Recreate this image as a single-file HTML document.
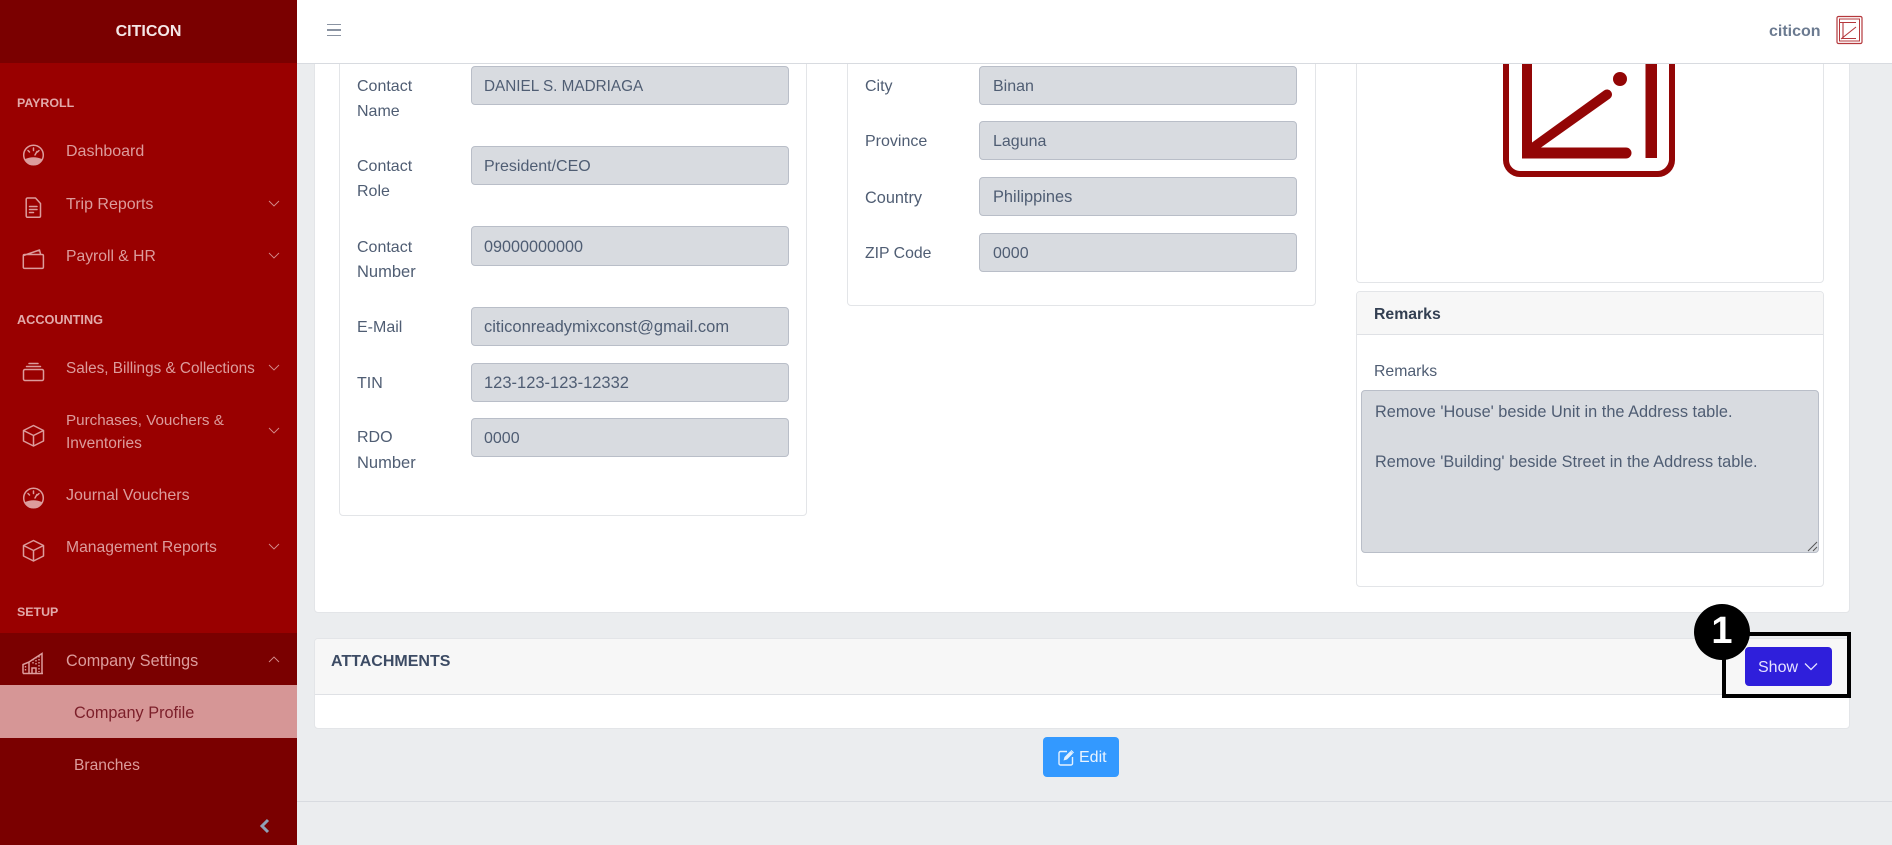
<!DOCTYPE html>
<html lang="en">
<head>
<meta charset="utf-8">
<title>Company Profile</title>
<style>
html,body{margin:0;padding:0;width:1892px;height:845px;overflow:hidden;background:#ebedef;font-family:"Liberation Sans",sans-serif;font-size:16px;color:#4f5d73}
*{box-sizing:border-box}
.a{position:absolute}
.t{position:absolute;height:24px;line-height:24px;white-space:nowrap;margin-top:1px}
.side{color:#dc9c9c}
.lab{font-weight:bold;font-size:12.400px;color:#e2aaaa}
.card{position:absolute;background:#fff;border:1px solid #e3e5e8;border-radius:4px}
.inp{position:absolute;background:#d8dbe0;border:1px solid #b9bec8;border-radius:4px;height:39px;line-height:39px;padding-left:12px;color:#4f5d73;white-space:nowrap}
svg{position:absolute;overflow:visible}
.ic{fill:none;stroke:#dc9c9c;stroke-width:1.5;stroke-linejoin:round;stroke-linecap:round}
.ch{fill:none;stroke:#d48c8c;stroke-width:.9}
</style>
</head>
<body>
<!-- main content -->
<div class="card" style="left:314px;top:40px;width:1536px;height:573px"></div>

<div class="card" style="left:339px;top:30px;width:468px;height:486px"></div>
<div class="card" style="left:847px;top:30px;width:469px;height:276px"></div>
<div class="card" style="left:1356px;top:30px;width:468px;height:253px"></div>

<svg style="left:0;top:0" width="1892" height="200">
  <g fill="#930606">
    <path d="M1503 20h6v140a11 11 0 0 0 11 11h137a12 12 0 0 0 12-11V20h6v140a17 17 0 0 1-17 17H1520a17 17 0 0 1-17-17z"/>
    <path d="M1522 40h10v102.500l72-52a5 5 0 0 1 6 8l-69 49h85a5.500 5.500 0 0 1 0 11h-104z"/>
    <rect x="1645.500" y="40" width="11.500" height="118"/>
    <circle cx="1620" cy="79" r="7"/>
  </g>
</svg>

<!-- left labels -->
<div class="t" style="left:357px;top:74px">Contact</div>
<div class="t" style="left:357px;top:99px">Name</div>
<div class="t" style="left:357px;top:154px">Contact</div>
<div class="t" style="left:357px;top:179px">Role</div>
<div class="t" style="left:357px;top:235px">Contact</div>
<div class="t" style="left:357px;top:259px;font-size:16.500px">Number</div>
<div class="t" style="left:357px;top:315px">E-Mail</div>
<div class="t" style="left:357px;top:371px">TIN</div>
<div class="t" style="left:357px;top:425px">RDO</div>
<div class="t" style="left:357px;top:450px;font-size:16.500px">Number</div>

<div class="inp" style="left:471px;top:66px;width:318px;font-size:15.300px">DANIEL S. MADRIAGA</div>
<div class="inp" style="left:471px;top:146px;width:318px">President/CEO</div>
<div class="inp" style="left:471px;top:226px;width:318px;height:40px;line-height:40px;font-size:16.200px">09000000000</div>
<div class="inp" style="left:471px;top:307px;width:318px;font-size:16.500px">citiconreadymixconst@gmail.com</div>
<div class="inp" style="left:471px;top:363px;width:318px;font-size:16.500px">123-123-123-12332</div>
<div class="inp" style="left:471px;top:418px;width:318px">0000</div>

<!-- middle -->
<div class="t" style="left:865px;top:74px">City</div>
<div class="t" style="left:865px;top:129px">Province</div>
<div class="t" style="left:865px;top:185px;font-size:16.300px">Country</div>
<div class="t" style="left:865px;top:241px;font-size:15.800px">ZIP Code</div>
<div class="inp" style="left:979px;top:66px;width:318px;padding-left:13px">Binan</div>
<div class="inp" style="left:979px;top:121px;width:318px;padding-left:13px">Laguna</div>
<div class="inp" style="left:979px;top:177px;width:318px;padding-left:13px;font-size:16.400px">Philippines</div>
<div class="inp" style="left:979px;top:233px;width:318px;padding-left:13px">0000</div>

<!-- remarks -->
<div class="card" style="left:1356px;top:291px;width:468px;height:296px"></div>
<div class="a" style="left:1357px;top:292px;width:466px;height:43px;background:#f7f7f7;border-bottom:1px solid #dfe1e5;border-radius:3px 3px 0 0"></div>
<div class="t" style="left:1374px;top:302px;font-weight:bold;color:#333f52;font-size:15.800px">Remarks</div>
<div class="t" style="left:1374px;top:359px;font-size:15.800px">Remarks</div>
<div class="a" style="left:1361px;top:390px;width:458px;height:163px;background:#d8dbe0;border:1px solid #b9bec8;border-radius:4px"></div>
<div class="t" style="left:1375px;top:399px;font-size:16.330px">Remove 'House' beside Unit in the Address table.</div>
<div class="t" style="left:1375px;top:449px;font-size:16.320px">Remove 'Building' beside Street in the Address table.</div>
<svg style="left:1805px;top:540px" width="14" height="12"><path d="M3 11L12 2M8 11l4-4" stroke="#555" stroke-width="1" fill="none"/></svg>

<!-- attachments -->
<div class="card" style="left:314px;top:638px;width:1536px;height:91px"></div>
<div class="a" style="left:315px;top:639px;width:1534px;height:56px;background:#f7f7f7;border-bottom:1px solid #dfe1e5;border-radius:3px 3px 0 0"></div>
<div class="t" style="left:331px;top:649px;font-weight:bold;font-size:16px;color:#3c4b64">ATTACHMENTS</div>

<div class="a" style="left:1745px;top:647px;width:87px;height:39px;background:#2f1fdb;border-radius:4px"></div>
<div class="t" style="left:1758px;top:655px;color:#e6e3ff">Show</div>
<svg style="left:1804px;top:662px" width="14" height="9"><path d="M1 1.500l6 6 6-6" fill="none" stroke="#e6e3ff" stroke-width="1.300"/></svg>

<div class="a" style="left:1722px;top:632px;width:129px;height:66px;border:4px solid #000"></div>
<div class="a" style="left:1694px;top:604px;width:56px;height:56px;background:#000;border-radius:50%"></div>
<div class="t" style="left:1694px;top:615px;width:56px;height:30px;line-height:30px;text-align:center;font-weight:bold;font-size:38px;color:#fff">1</div>

<!-- edit -->
<div class="a" style="left:1043px;top:737px;width:76px;height:40px;background:#3399ff;border-radius:4px"></div>
<svg style="left:1058px;top:749px" width="17" height="17" fill="none" stroke="#e4f1ff" stroke-width="1.400">
  <path d="M9 2.500H2.500a1.500 1.500 0 0 0-1.500 1.500v10.500a1.500 1.500 0 0 0 1.500 1.500h10.500a1.500 1.500 0 0 0 1.500-1.500V8"/>
  <path d="M5.500 11.500l1-3.500 6-6 2.500 2.500-6 6z" fill="#e4f1ff" stroke="none"/>
  <path d="M13.500 1l2.500 2.500-.8.800-2.500-2.500z" fill="#e4f1ff" stroke="none"/>
</svg>
<div class="t" style="left:1079px;top:745px;color:#eaf4ff">Edit</div>

<!-- footer line -->
<div class="a" style="left:297px;top:801px;width:1595px;height:1px;background:#d8dbe0"></div>

<!-- top bar -->
<div class="a" style="left:297px;top:0;width:1595px;height:64px;background:#fff;border-bottom:1px solid #d8dbe0"></div>
<div class="a" style="left:327px;top:23.500px;width:14px;height:1.500px;background:#8a93a2"></div>
<div class="a" style="left:327px;top:29px;width:14px;height:1.500px;background:#8a93a2"></div>
<div class="a" style="left:327px;top:34.500px;width:14px;height:1.500px;background:#8a93a2"></div>
<div class="t" style="left:1769px;top:19px;font-weight:bold;color:#6b7a90">citicon</div>
<svg style="left:1836px;top:16px" width="27" height="28" fill="none" stroke="#b5383c">
  <rect x="1" y=".500" width="25" height="27" rx="1.500" stroke-width="1.200"/>
  <rect x="3.500" y="3" width="20" height="22" stroke-width="1"/>
  <path d="M4 6.500h16M7 7v16M5 23l15-12M6 22.500h14" stroke-width="1.100"/>
</svg>

<!-- sidebar -->
<div class="a" style="left:0;top:0;width:297px;height:845px;background:#990000"></div>
<div class="a" style="left:0;top:0;width:297px;height:63px;background:#7a0000"></div>
<div class="t" style="left:0;top:19px;width:297px;text-align:center;font-weight:bold;color:#f4e6e6">CITICON</div>

<div class="t lab" style="left:17px;top:90px">PAYROLL</div>
<div class="t side" style="left:66px;top:139px">Dashboard</div>
<div class="t side" style="left:66px;top:192px">Trip Reports</div>
<div class="t side" style="left:66px;top:244px;font-size:15.700px">Payroll &amp; HR</div>
<div class="t lab" style="left:17px;top:307px;font-size:12.700px">ACCOUNTING</div>
<div class="t side" style="left:66px;top:356px;font-size:15.300px">Sales, Billings &amp; Collections</div>
<div class="t side" style="left:66px;top:408px;font-size:15.200px">Purchases, Vouchers &amp;</div>
<div class="t side" style="left:66px;top:431px;font-size:15.500px">Inventories</div>
<div class="t side" style="left:66px;top:483px">Journal Vouchers</div>
<div class="t side" style="left:66px;top:535px;font-size:15.700px">Management Reports</div>
<div class="t lab" style="left:17px;top:599px">SETUP</div>

<div class="a" style="left:0;top:633px;width:297px;height:212px;background:#7a0000"></div>
<div class="a" style="left:0;top:685px;width:297px;height:53px;background:#d69696"></div>
<div class="t side" style="left:66px;top:648px;font-size:16.200px">Company Settings</div>
<div class="t" style="left:74px;top:700px;color:#7c1f2a;font-size:16.300px">Company Profile</div>
<div class="t side" style="left:74px;top:753px;font-size:15.600px">Branches</div>

<!-- chevrons -->
<svg style="left:0;top:0" width="296" height="845">
  <path class="ch" d="M269 201l5 5 5-5M269 253l5 5 5-5M269 365l5 5 5-5M269 428l5 5 5-5M269 544l5 5 5-5M269 662l5-5 5 5"/>
  <path d="M268 820l-6 6 6 6" fill="none" stroke="#8fa0b5" stroke-width="3"/>

  <!-- speedometer -->
  <g>
    <circle class="ic" cx="33.500" cy="155" r="9.800"/>
    <path d="M24.700 159.300q8.800-4 17.600 0A9.800 9.800 0 0 1 24.700 159.300z" fill="#dc9c9c"/>
    <path class="ic" d="M33.500 148v2.500M28 150.500l1.500 1.500M39 150.500l-1.500 1.500M35 155l2-3.500" stroke-width="1.200"/>
  </g>
  <g transform="translate(0 343)">
    <circle class="ic" cx="33.500" cy="155" r="9.800"/>
    <path d="M24.700 159.300q8.800-4 17.600 0A9.800 9.800 0 0 1 24.700 159.300z" fill="#dc9c9c"/>
    <path class="ic" d="M33.500 148v2.500M28 150.500l1.500 1.500M39 150.500l-1.500 1.500M35 155l2-3.500" stroke-width="1.200"/>
  </g>
  <!-- document -->
  <path class="ic" d="M27.500 198h8l5 5.500v12.500a1.300 1.300 0 0 1-1.300 1.300H27.500a1.300 1.300 0 0 1-1.300-1.300V199.300a1.300 1.300 0 0 1 1.300-1.300z"/>
  <path class="ic" d="M29.500 206.500h7.500M29.500 209.500h7.500M29.500 212.500h4"/>
  <!-- wallet -->
  <path class="ic" d="M23.500 255.500l16-5.500 1 4M24.500 254.500h17.700a1.200 1.200 0 0 1 1.200 1.200v11.500a1.200 1.200 0 0 1-1.200 1.200H24.500a1.200 1.200 0 0 1-1.200-1.200v-11.500a1.200 1.200 0 0 1 1.200-1.200z"/>
  <!-- stack -->
  <path class="ic" d="M29 363.500h9M26.500 366.500h14M25 369.500h17a1.500 1.500 0 0 1 1.500 1.500v8a1.500 1.500 0 0 1-1.500 1.500H25a1.500 1.500 0 0 1-1.500-1.500v-8a1.500 1.500 0 0 1 1.500-1.500z"/>
  <!-- boxes -->
  <path class="ic" d="M33.500 425.500l10 5v10.500l-10 5-10-5v-10.500zM23.500 430.500l10 5 10-5M33.500 435.500v10.500"/>
  <path class="ic" transform="translate(0 115)" d="M33.500 425.500l10 5v10.500l-10 5-10-5v-10.500zM23.500 430.500l10 5 10-5M33.500 435.500v10.500"/>
  <!-- building -->
  <path fill="none" stroke="#dc9c9c" stroke-width="1.500" d="M23 673.500v-9l6-2.500v11.500M29 662l13-8.500v20M23 673.500h20M32 673v-5h4v5"/>
  <path stroke="#dc9c9c" stroke-width="1.400" stroke-dasharray="1.500 1.500" fill="none" d="M33 659v6M36 657v8M39 656v16M25.500 666v6"/>
</svg>
</body>
</html>
